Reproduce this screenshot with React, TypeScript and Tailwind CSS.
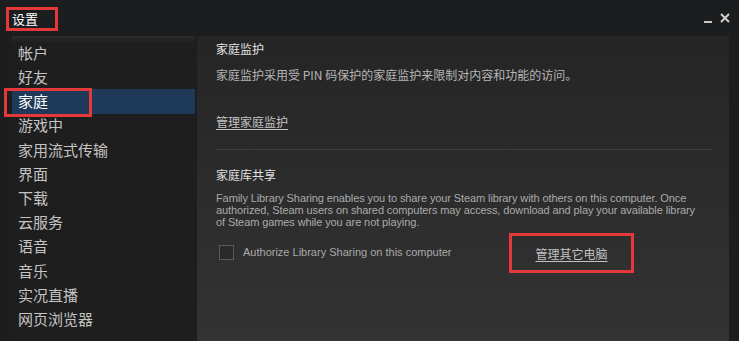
import React from 'react';

const cjk = { fontFamily: '"Noto Sans CJK SC", "Liberation Sans", sans-serif' };
const latin = { fontFamily: '"Liberation Sans", "Noto Sans CJK SC", sans-serif' };

const navItems = ['帐户', '好友', '家庭', '游戏中', '家用流式传输', '界面', '下载', '云服务', '语音', '音乐', '实况直播', '网页浏览器'];

export default function App() {
  return (
    <div className="w-[739px] h-[341px] overflow-hidden bg-[#1c1d1f] flex flex-col" style={cjk}>
      {/* Title bar */}
      <div className="h-[36px] flex items-center justify-between pl-[12px] pr-[8px] shrink-0 relative">
        <span className="relative text-[13px] text-white leading-none">
          设置
          <span className="absolute -left-[6px] -top-[5px] w-[52px] h-[24px] border-[3px] border-[#e5383b]" />
        </span>
        <div className="flex items-end gap-[6px] text-[#c8c8c8]">
          <svg width="10" height="12" viewBox="0 0 10 12"><rect x="1" y="9" width="8" height="2" fill="#c8c8c8" /></svg>
          <svg width="12" height="12" viewBox="0 0 12 12"><path d="M2 2 L10 10 M10 2 L2 10" stroke="#d0d0d0" strokeWidth="2" /></svg>
        </div>
      </div>

      <div className="flex flex-1 pl-[12px] pr-[10px]">
        {/* Sidebar */}
        <div className="w-[183px] bg-[#1e1e1e] flex flex-col pt-[5px] bg-[linear-gradient(#2c2c2c,#1e1e1e_7px)]">
          {navItems.map((item) => {
            const active = item === '家庭';
            return (
              <div
                key={item}
                className={`relative h-[24.2px] flex items-center pl-[6px] text-[15px] ${active ? 'bg-[#1f3a58] text-white' : 'text-[#c4c4c4]'}`}
              >
                {item}
                {active && <span className="absolute -left-[8px] -top-[1px] w-[88px] h-[29px] border-[3px] border-[#e5383b]" />}
              </div>
            );
          })}
        </div>

        {/* Content */}
        <div className="ml-[2px] flex-1 bg-[linear-gradient(#252525,#333333)] pl-[19px] pr-[17px] pt-[5px]">
          <div className="text-[12px] leading-[16px] text-[#e2e2e2]">家庭监护</div>
          <div className="mt-[10px] text-[12px] leading-[16px] text-[#b6b6b6]">家庭监护采用受 PIN 码保护的家庭监护来限制对内容和功能的访问。</div>
          <div className="mt-[31px] text-[12px] leading-[16px] text-[#c2c2c2] underline underline-offset-2">管理家庭监护</div>
          <div className="mt-[19px] h-px bg-[#3e3e3e]" />
          <div className="mt-[17px] text-[12px] leading-[16px] text-[#e0e0e0]">家庭库共享</div>
          <p className="mt-[9px] max-w-[485px] text-[11px] leading-[12px] tracking-[-0.1px] text-[#aaaaaa]" style={latin}>
            Family Library Sharing enables you to share your Steam library with others on this computer. Once authorized, Steam users on shared computers may access, download and play your available library of Steam games while you are not playing.
          </p>
          <div className="mt-[16px] flex items-center h-[16px]">
            <div className="ml-[3px] w-[15px] h-[15px] border border-[#5a5a5a] bg-[#2a2a2a]" />
            <span className="ml-[9px] text-[11px] text-[#aaaaaa]" style={latin}>Authorize Library Sharing on this computer</span>
            <span className="relative ml-[84px] mt-[4px] text-[12px] text-[#c2c2c2] underline underline-offset-2">
              管理其它电脑
              <span className="absolute -left-[27px] -top-[12px] w-[125px] h-[40px] border-[3px] border-[#e5383b]" />
            </span>
          </div>
        </div>
      </div>
    </div>
  );
}
